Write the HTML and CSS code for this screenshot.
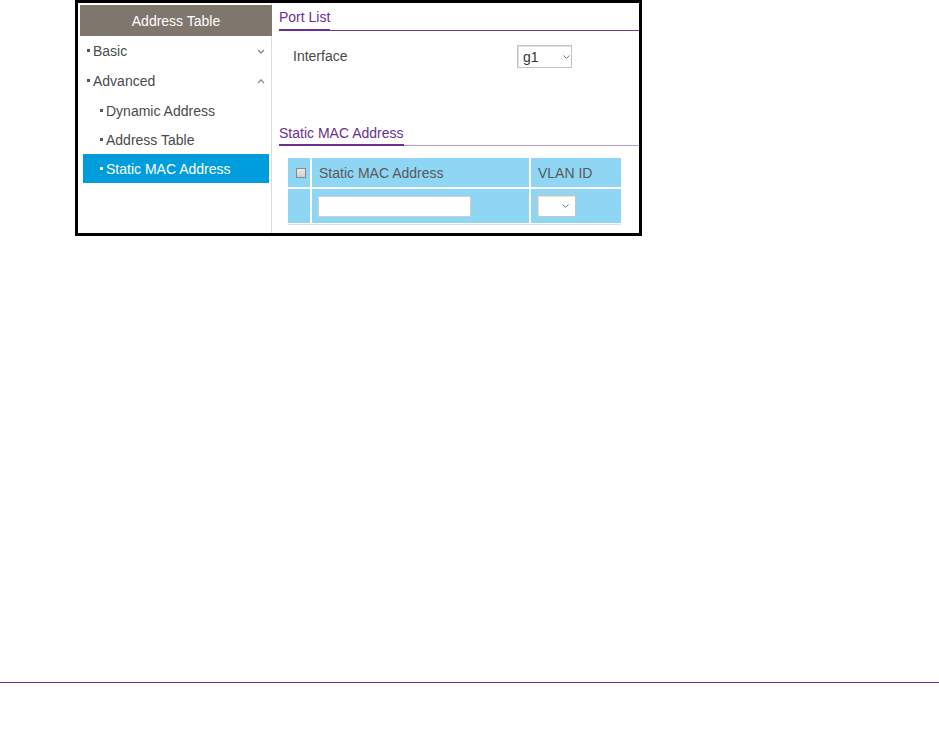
FILE: index.html
```html
<!DOCTYPE html>
<html>
<head>
<meta charset="utf-8">
<link rel="stylesheet" href="styles.css">
</head>
<body>
<div class="frame">
  <aside class="sidebar">
    <div class="side-head">Address Table</div>
    <ul class="menu">
      <li class="item top"><span class="label">Basic</span>
        <svg class="chev" width="8" height="5" viewBox="0 0 8 5"><path d="M1 1 L4 4 L7 1" fill="none" stroke="#8a8a8a" stroke-width="1.3"/></svg>
      </li>
      <li class="item top"><span class="label">Advanced</span>
        <svg class="chev" width="8" height="5" viewBox="0 0 8 5"><path d="M1 4 L4 1 L7 4" fill="none" stroke="#8a8a8a" stroke-width="1.3"/></svg>
      </li>
      <li class="item sub"><span class="label">Dynamic Address</span></li>
      <li class="item sub"><span class="label">Address Table</span></li>
      <li class="item sub active"><span class="label">Static MAC Address</span></li>
    </ul>
  </aside>
  <main class="content">
    <div class="tabs"><span class="tab">Port List</span></div>
    <div class="field">
      <span class="field-label">Interface</span>
      <span class="select sel-if"><span class="sel-val">g1</span>
        <svg class="sel-chev" width="7" height="4" viewBox="0 0 7 4"><path d="M0.5 0.5 L3.5 3.3 L6.5 0.5" fill="none" stroke="#777" stroke-width="1"/></svg>
      </span>
      <span class="tick"></span>
    </div>
    <div class="tabs tabs2"><span class="tab tab2">Static MAC Address</span></div>
    <div class="grid">
      <div class="cell chk-cell"><span class="chk"></span></div>
      <div class="cell head">Static MAC Address</div>
      <div class="cell head">VLAN ID</div>
      <div class="cell"></div>
      <div class="cell in-cell"><span class="text-input"></span></div>
      <div class="cell in-cell"><span class="select sel-vlan">
        <svg class="sel-chev" width="7" height="4" viewBox="0 0 7 4"><path d="M0.5 0.5 L3.5 3.3 L6.5 0.5" fill="none" stroke="#777" stroke-width="1"/></svg>
      </span></div>
    </div>
    <div class="grid-foot"></div>
  </main>
</div>
<div class="page-rule"></div>
</body>
</html>
```
FILE: styles.css
```css
html, body {
  margin: 0;
  padding: 0;
  background: #fff;
}
body {
  font-family: "Liberation Sans", Arial, sans-serif;
  font-size: 14px;
  color: #4a4a4a;
  width: 939px;
  height: 752px;
  overflow: hidden;
}
.frame {
  margin-left: 75px;
  width: 561px;
  height: 230px;
  border: 3px solid #000;
  display: flex;
}
.sidebar {
  width: 191px;
  padding: 2px 0 0 2px;
  border-right: 1px solid #dcdcdc;
}
.side-head {
  height: 31px;
  line-height: 32px;
  margin-right: -1px;
  background: #7f766d;
  color: #fff;
  text-align: center;
}
.menu {
  list-style: none;
  margin: 0;
  padding: 0;
}
.item {
  height: 29px;
  display: flex;
  align-items: center;
  justify-content: space-between;
  padding-left: 7px;
  padding-right: 6px;
  color: #4a4a4a;
}
.item.top {
  height: 30px;
}
.label::before {
  content: "";
  display: inline-block;
  width: 3px;
  height: 3px;
  background: #555;
  margin-right: 3px;
  vertical-align: 4px;
}
.item.sub {
  padding-left: 20px;
}
.item.active {
  margin-left: 3px;
  margin-right: 2px;
  padding-left: 17px;
  background: #009ddc;
  color: #fff;
}
.item.active .label::before {
  background: #fff;
}
.chev {
  display: block;
}
.content {
  flex: 1;
  padding-left: 7px;
}
.tabs {
  border-bottom: 1px solid #6e3a96;
  display: flex;
}
.tab {
  padding: 4px 0 2px;
  line-height: 20px;
  border-bottom: 2px solid #6a2f92;
  margin-bottom: -1px;
  color: #6a2f92;
}
.field {
  display: flex;
  align-items: flex-start;
  margin-top: 14px;
  padding-left: 14px;
  height: 23px;
}
.field-label {
  width: 224px;
  line-height: 23px;
  color: #4a4a4a;
}
.select {
  box-sizing: border-box;
  border: 1px solid #c4c4c4;
  box-shadow: inset 1px 1px 0 #e2e2e2;
  background: #fff;
  display: flex;
  align-items: center;
  position: relative;
}
.sel-if {
  width: 55px;
  height: 23px;
  padding-left: 5px;
}
.sel-val {
  color: #333;
  font-size: 14px;
}
.sel-if .sel-chev {
  margin-left: 24px;
}
.tick {
  width: 1px;
  height: 5px;
  background: #999;
  margin-left: -1px;
}
.tabs2 {
  margin-top: 51px;
  border-bottom-color: #b49ccb;
}
.tab2 {
  padding: 4px 0 1px;
}
.grid {
  margin-top: 12px;
  margin-left: 9px;
  display: grid;
  grid-template-columns: 22px 217px 90px;
  grid-template-rows: 29px 34px;
  gap: 2px;
  width: 333px;
}
.cell {
  background: #8fd5f4;
  display: flex;
  align-items: center;
  color: #5a5a5a;
}
.head {
  padding-left: 7px;
}
.chk-cell {
  padding-left: 8px;
}
.chk {
  box-sizing: border-box;
  width: 10px;
  height: 10px;
  border: 1px solid #8a8a8a;
  background: linear-gradient(#eaeaea, #cfcfcf);
}
.in-cell {
  padding-left: 6px;
}
.text-input {
  box-sizing: border-box;
  width: 153px;
  height: 21px;
  background: #fff;
  border: 1px solid #cfcfcf;
}
.sel-vlan {
  width: 39px;
  height: 22px;
  justify-content: flex-end;
  padding-right: 6px;
}
.grid-foot {
  margin-left: 9px;
  margin-top: 1px;
  width: 333px;
  height: 1px;
  background: #e0e0e0;
}
.page-rule {
  margin-top: 446px;
  height: 1px;
  background: #6a2f92;
}
```
